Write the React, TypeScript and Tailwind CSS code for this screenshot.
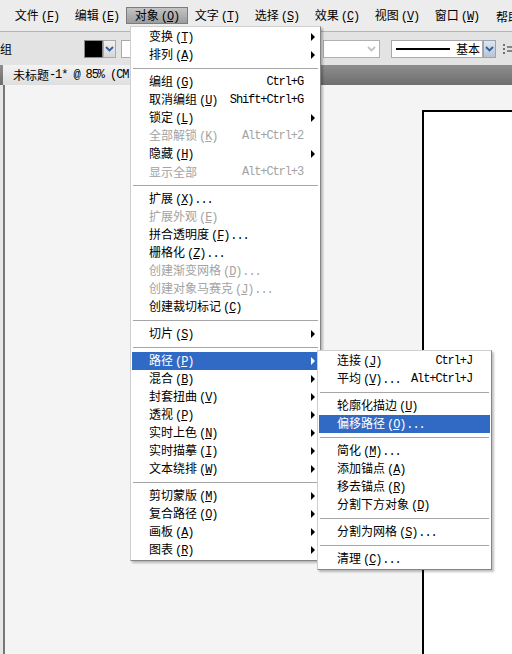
import React from "react";

const mono = "[font-family:'Liberation_Mono',monospace] text-[12px] tracking-[-1.1px]";
const cjk = "[font-family:'Noto_Sans_CJK_SC',sans-serif] text-[12px]";

type Item =
  | "sep"
  | { zh: string; k?: string; dots?: boolean; sc?: string; sub?: boolean; dis?: boolean; hl?: boolean };

function Label({ zh, k, dots }: { zh: string; k?: string; dots?: boolean }) {
  return (
    <span className="flex items-baseline whitespace-nowrap">
      <span className={cjk}>{zh}</span>
      {k && (
        <span className={`${mono} ml-[2px]`}>
          (<span className="underline underline-offset-1">{k}</span>)
        </span>
      )}
      {dots && <span className={`${mono} ml-[1px]`}>...</span>}
    </span>
  );
}

function Tri({ white }: { white?: boolean }) {
  return (
    <span
      className={`block w-0 h-0 border-y-[4px] border-y-transparent border-l-[4px] ${
        white ? "border-l-white" : "border-l-black"
      }`}
    />
  );
}

function Sep() {
  return (
    <div className="h-[9px] flex flex-col justify-center px-[1px]">
      <div className="h-px bg-[#a6a6a6]" />
      <div className="h-px bg-white" />
    </div>
  );
}

const mainItems: Item[] = [
  { zh: "变换", k: "T", sub: true },
  { zh: "排列", k: "A", sub: true },
  "sep",
  { zh: "编组", k: "G", sc: "Ctrl+G" },
  { zh: "取消编组", k: "U", sc: "Shift+Ctrl+G" },
  { zh: "锁定", k: "L", sub: true },
  { zh: "全部解锁", k: "K", sc: "Alt+Ctrl+2", dis: true },
  { zh: "隐藏", k: "H", sub: true },
  { zh: "显示全部", sc: "Alt+Ctrl+3", dis: true },
  "sep",
  { zh: "扩展", k: "X", dots: true },
  { zh: "扩展外观", k: "E", dis: true },
  { zh: "拼合透明度", k: "F", dots: true },
  { zh: "栅格化", k: "Z", dots: true },
  { zh: "创建渐变网格", k: "D", dots: true, dis: true },
  { zh: "创建对象马赛克", k: "J", dots: true, dis: true },
  { zh: "创建裁切标记", k: "C" },
  "sep",
  { zh: "切片", k: "S", sub: true },
  "sep",
  { zh: "路径", k: "P", sub: true, hl: true },
  { zh: "混合", k: "B", sub: true },
  { zh: "封套扭曲", k: "V", sub: true },
  { zh: "透视", k: "P", sub: true },
  { zh: "实时上色", k: "N", sub: true },
  { zh: "实时描摹", k: "I", sub: true },
  { zh: "文本绕排", k: "W", sub: true },
  "sep",
  { zh: "剪切蒙版", k: "M", sub: true },
  { zh: "复合路径", k: "O", sub: true },
  { zh: "画板", k: "A", sub: true },
  { zh: "图表", k: "R", sub: true },
];

const subItems: Item[] = [
  { zh: "连接", k: "J", sc: "Ctrl+J" },
  { zh: "平均", k: "V", dots: true, sc: "Alt+Ctrl+J" },
  "sep",
  { zh: "轮廓化描边", k: "U" },
  { zh: "偏移路径", k: "O", dots: true, hl: true },
  "sep",
  { zh: "简化", k: "M", dots: true },
  { zh: "添加锚点", k: "A" },
  { zh: "移去锚点", k: "R" },
  { zh: "分割下方对象", k: "D" },
  "sep",
  { zh: "分割为网格", k: "S", dots: true },
  "sep",
  { zh: "清理", k: "C", dots: true },
];

function MenuRows({ items, sub }: { items: Item[]; sub?: boolean }) {
  return (
    <>
      {items.map((it, i) => {
        if (it === "sep") return <Sep key={i} />;
        const color = it.hl ? "bg-[#316ac5] text-white" : it.dis ? "text-[#a3a3a3]" : "text-black";
        return (
          <div
            key={i}
            className={`h-[18px] flex items-center ${sub ? "pl-[18px] pr-[18px]" : "pl-[17px]"} ${color}`}
          >
            <Label zh={it.zh} k={it.k} dots={it.dots} />
            <div className="flex-1" />
            {it.sc && <span className={`${mono} whitespace-nowrap`}>{it.sc}</span>}
            {!sub && (
              <div className="w-[16px] flex justify-end pr-[4px]">{it.sub && <Tri white={it.hl} />}</div>
            )}
          </div>
        );
      })}
    </>
  );
}

function Chevron({ color }: { color: string }) {
  return (
    <svg width="9" height="6" viewBox="0 0 9 6">
      <path d="M1 1 L4.5 4.5 L8 1" fill="none" stroke={color} strokeWidth="1.8" />
    </svg>
  );
}

const bar = [
  { zh: "文件", k: "F" },
  { zh: "编辑", k: "E" },
  { zh: "对象", k: "O", on: true },
  { zh: "文字", k: "T" },
  { zh: "选择", k: "S" },
  { zh: "效果", k: "C" },
  { zh: "视图", k: "V" },
  { zh: "窗口", k: "W" },
];

export default function App() {
  return (
    <div className="relative w-[512px] h-[654px] overflow-hidden bg-[#e6e6e6] flex flex-col text-black">
      {/* menu bar */}
      <div className="h-[32px] shrink-0 bg-[#ececec] border-b border-[#b4b4b4] flex items-center pl-[7px]">
        {bar.map((b, i) => (
          <div key={i} className="w-[60px] h-[18px] flex items-center justify-center shrink-0">
            <div
              className={`h-[17px] flex items-center px-[8px] ${
                b.on ? "bg-gradient-to-b from-[#c4c4c4] to-[#9c9c9c] border border-[#7c7c7c]" : ""
              }`}
            >
              <Label zh={b.zh} k={b.k} />
            </div>
          </div>
        ))}
        <div className="shrink-0 pl-[9px] whitespace-nowrap">
          <span className={cjk}>帮助</span>
        </div>
      </div>

      {/* control toolbar */}
      <div className="h-[33px] shrink-0 bg-[#e3e3e3] flex items-center">
        <span className={`${cjk} shrink-0`}>组</span>
        <div className="ml-[72px] w-[19px] h-[18px] bg-black border border-[#8a8a8a] shrink-0" />
        <div className="w-[13px] h-[18px] bg-gradient-to-b from-[#f2f2f2] to-[#d6d6d6] border border-[#a9a9a9] flex items-center justify-center shrink-0">
          <Chevron color="#2f5f9e" />
        </div>
        <div className="ml-[5px] w-[9px] h-[18px] bg-white border border-r-0 border-[#a9a9a9] shrink-0" />
        <div className="ml-[193px] w-[57px] h-[18px] bg-white border border-[#b0b0b0] flex items-center justify-end pr-[3px] shrink-0">
          <Chevron color="#c2c2c2" />
        </div>
        <div className="ml-[11px] w-[92px] h-[18px] bg-white border border-[#a9a9a9] flex items-center shrink-0">
          <div className="ml-[4px] w-[54px] h-[2px] bg-black" />
          <span className={`${cjk} ml-[6px]`}>基本</span>
        </div>
        <div className="w-[13px] h-[18px] bg-gradient-to-b from-[#dfe6f0] to-[#b8c3d3] border border-[#9aa3b0] flex items-center justify-center shrink-0">
          <Chevron color="#2f5f9e" />
        </div>
        <div className="ml-[6px] shrink-0">
          <svg width="12" height="12" viewBox="0 0 12 12">
            <path d="M1 2 L3 2 M1 6 L3 6 M1 10 L3 10" stroke="#000" strokeWidth="1" />
            <path d="M5 4 L12 4 M5 8 L12 8" stroke="#666" strokeWidth="1.5" />
          </svg>
        </div>
      </div>

      {/* document tab row */}
      <div className="h-[20px] shrink-0 bg-gradient-to-b from-[#8e8e8e] to-[#6e6e6e] flex items-stretch pl-[3px]">
        <div className="w-[127px] overflow-hidden bg-gradient-to-b from-[#f3f3f3] to-[#dedede] pl-[10px] flex items-center whitespace-nowrap">
          <span className={cjk}>未标题</span>
          <span className={mono}>-1* @ 85% (CM</span>
        </div>
      </div>

      {/* canvas */}
      <div className="flex-1 flex ml-[3px] border-l-2 border-[#777777] bg-[#f4f4f4] pl-[417px] pt-[25px]">
        <div className="flex-1 bg-white border-l-2 border-t-2 border-black" />
      </div>

      {/* object menu */}
      <div className="absolute left-[130px] top-[26px] w-[191px] bg-white border border-l-[#cfcfcf] border-t-[#cfcfcf] border-r-[#858585] border-b-[#858585] p-[1px] shadow-[2px_2px_2px_rgba(0,0,0,0.25)]">
        <MenuRows items={mainItems} />
      </div>

      {/* path submenu */}
      <div className="absolute left-[317px] top-[350px] w-[175px] bg-white border border-l-[#cfcfcf] border-t-[#cfcfcf] border-r-[#858585] border-b-[#858585] p-[1px] shadow-[2px_2px_2px_rgba(0,0,0,0.25)]">
        <MenuRows items={subItems} sub />
      </div>
    </div>
  );
}
